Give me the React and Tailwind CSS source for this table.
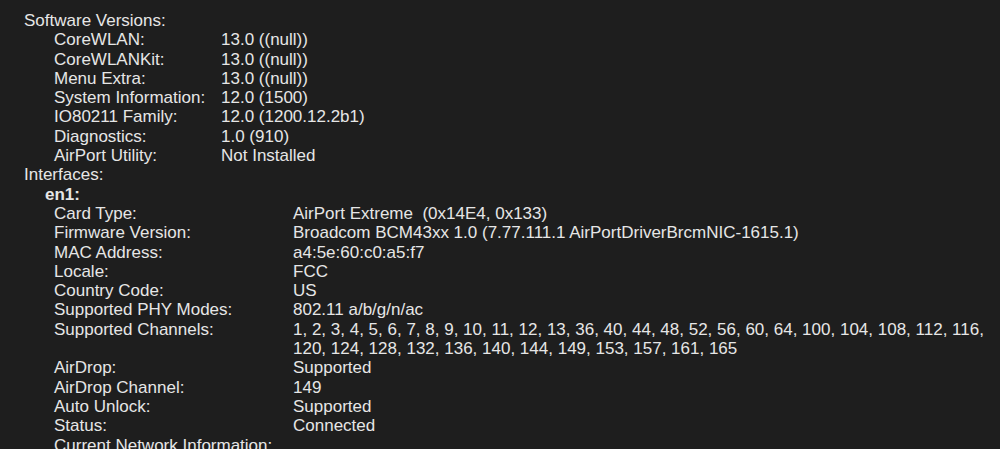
import React from "react";

const sw = [
  ["CoreWLAN:", "13.0 ((null))"],
  ["CoreWLANKit:", "13.0 ((null))"],
  ["Menu Extra:", "13.0 ((null))"],
  ["System Information:", "12.0 (1500)"],
  ["IO80211 Family:", "12.0 (1200.12.2b1)"],
  ["Diagnostics:", "1.0 (910)"],
  ["AirPort Utility:", "Not Installed"],
];

const iface = [
  ["Card Type:", "AirPort Extreme\u00a0\u00a0(0x14E4, 0x133)"],
  ["Firmware Version:", "Broadcom BCM43xx 1.0 (7.77.111.1 AirPortDriverBrcmNIC-1615.1)"],
  ["MAC Address:", "a4:5e:60:c0:a5:f7"],
  ["Locale:", "FCC"],
  ["Country Code:", "US"],
  ["Supported PHY Modes:", "802.11 a/b/g/n/ac"],
  [
    "Supported Channels:",
    <>
      <span>
        1, 2, 3, 4, 5, 6, 7, 8, 9, 10, 11, 12, 13, 36, 40, 44, 48, 52, 56, 60, 64, 100, 104, 108, 112, 116,
      </span>
      <br />
      <span>120, 124, 128, 132, 136, 140, 144, 149, 153, 157, 161, 165</span>
    </>,
  ],
  ["AirDrop:", "Supported"],
  ["AirDrop Channel:", "149"],
  ["Auto Unlock:", "Supported"],
  ["Status:", "Connected"],
];

export default function App() {
  return (
    <div
      className="w-[1000px] h-[449px] overflow-hidden bg-[#1e1e1e] text-[#e6e6e6] text-[17px] leading-[19.29px] pt-[11px] whitespace-nowrap"
      style={{ fontFamily: '"Liberation Sans", Arial, sans-serif' }}
    >
      <div className="pl-[24px]">Software Versions:</div>
      {sw.map(([k, v]) => (
        <div key={k} className="flex">
          <div className="pl-[54px] w-[221px] shrink-0">{k}</div>
          <div>{v}</div>
        </div>
      ))}
      <div className="pl-[24px]">Interfaces:</div>
      <div className="pl-[45px] font-bold">en1:</div>
      {iface.map(([k, v]) => (
        <div key={k} className="flex">
          <div className="pl-[54px] w-[293px] shrink-0">{k}</div>
          <div>{v}</div>
        </div>
      ))}
      <div className="pl-[54px]">Current Network Information:</div>
    </div>
  );
}
